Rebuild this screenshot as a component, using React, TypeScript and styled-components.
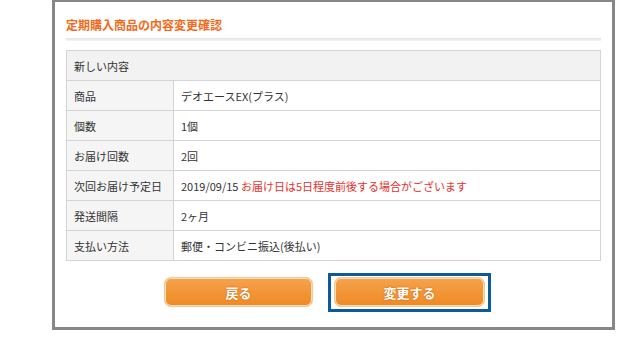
import React from 'react';
import styled, { createGlobalStyle } from 'styled-components';

const GlobalStyle = createGlobalStyle`
  html, body {
    margin: 0;
    padding: 0;
    background: #fff;
  }
  body {
    font-family: "Noto Sans CJK JP", "Noto Sans", sans-serif;
    color: #333;
  }
`;

type Row = { label: string; value: string; note?: string };

const rows: Row[] = [
  { label: '商品', value: 'デオエースEX(プラス)' },
  { label: '個数', value: '1個' },
  { label: 'お届け回数', value: '2回' },
  { label: '次回お届け予定日', value: '2019/09/15', note: 'お届け日は5日程度前後する場合がございます' },
  { label: '発送間隔', value: '2ヶ月' },
  { label: '支払い方法', value: '郵便・コンビニ振込(後払い)' },
];

export default function App() {
  return (
    <>
      <GlobalStyle />
      <StyledPage>
        <StyledPanel>
          <StyledTitle>定期購入商品の内容変更確認</StyledTitle>
          <StyledDivider />

          <StyledTable>
            <tbody>
              <tr>
                <StyledHeadCell colSpan={2}>新しい内容</StyledHeadCell>
              </tr>
              {rows.map((row) => (
                <tr key={row.label}>
                  <StyledLabelCell>{row.label}</StyledLabelCell>
                  <StyledValueCell>
                    {row.value}
                    {row.note && <StyledNote> {row.note}</StyledNote>}
                  </StyledValueCell>
                </tr>
              ))}
            </tbody>
          </StyledTable>

          <StyledActions>
            <StyledFocusRing>
              <StyledButton type="button" $width={149}>戻る</StyledButton>
            </StyledFocusRing>
            <StyledFocusRing $focused>
              <StyledButton type="button" $width={151}>変更する</StyledButton>
            </StyledFocusRing>
          </StyledActions>
        </StyledPanel>
      </StyledPage>
    </>
  );
}

const StyledPage = styled.div`
  width: 640px;
  height: 351px;
  overflow: hidden;
`;

const StyledPanel = styled.div`
  box-sizing: border-box;
  width: 563px;
  margin: -1px 0 0 52px;
  border: 3px solid #878787;
  padding: 14px 11px 15px 11px;
`;

const StyledTitle = styled.h2`
  margin: 0;
  font-size: 12px;
  font-weight: bold;
  line-height: 18px;
  color: #f26a1b;
`;

const StyledDivider = styled.div`
  margin-top: 4px;
  width: 535px;
  height: 3px;
  background: linear-gradient(#e4e4e4, #f3f3f3);
`;

const StyledTable = styled.table`
  margin-top: 9px;
  width: 535px;
  border-collapse: collapse;
  font-size: 11px;
  color: #333;

  td {
    border: 1px solid #d4d4d4;
    height: 30px;
    padding: 0 7px;
    box-sizing: border-box;
    vertical-align: middle;
  }
`;

const StyledHeadCell = styled.td`
  background: #f2f2f2;
`;

const StyledLabelCell = styled.td`
  width: 107px;
  background: #f5f5f5;
`;

const StyledValueCell = styled.td`
  background: #fff;
`;

const StyledNote = styled.span`
  color: #e8302b;
`;

const StyledActions = styled.div`
  display: flex;
  gap: 9px;
  margin-top: 12px;
  padding-left: 92px;
`;

const StyledFocusRing = styled.div<{ $focused?: boolean }>`
  border: 3px solid ${(p) => (p.$focused ? '#0a5a9c' : 'transparent')};
  padding: 1px 3px 2px;
  display: flex;
`;

const StyledButton = styled.button<{ $width: number }>`
  box-sizing: border-box;
  width: ${(p) => p.$width}px;
  height: 30px;
  border: 1px solid #f8c88f;
  border-radius: 7px;
  box-shadow: inset 0 0 0 1px #fbe0bd;
  background: linear-gradient(#f6a24c, #ef8a24);
  color: #fff;
  font-family: "Noto Sans CJK JP", sans-serif;
  font-size: 13px;
  font-weight: bold;
  text-shadow: 0 0 2px #c85a00;
  cursor: pointer;
  padding: 0;
`;
